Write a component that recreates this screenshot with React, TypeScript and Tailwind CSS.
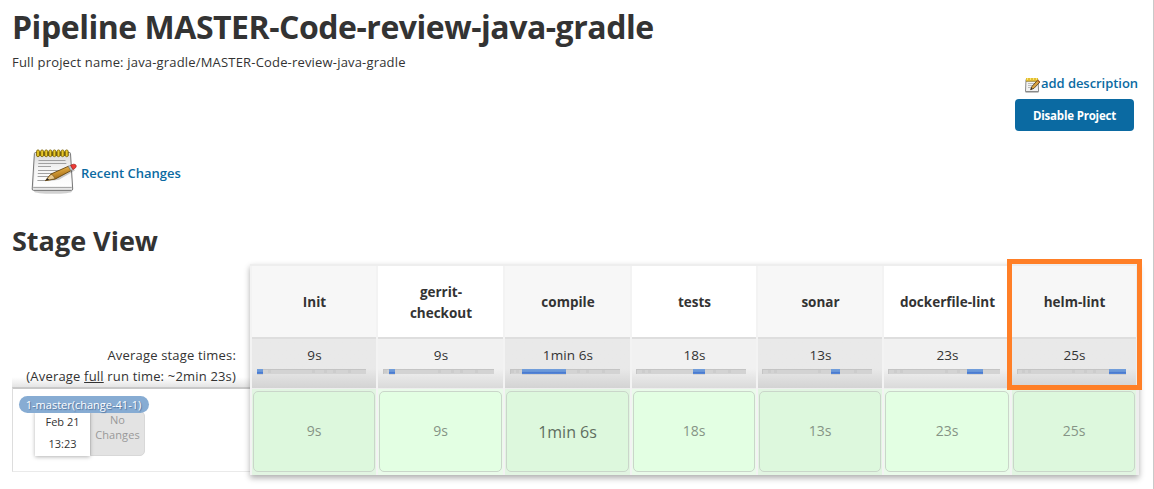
type Stage = {
  name: string;
  time: string;
  head: string;
  bar: number;
  from: number;
  to: number;
  ticks: number[];
  big?: boolean;
  tight?: boolean;
};

const STAGES: Stage[] = [
  { name: "Init", time: "9s", head: "Init", bar: 109, from: 0, to: 6, ticks: [11, 55, 67, 76, 91] },
  { name: "gerrit-checkout", time: "9s", head: "gerrit-\ncheckout", bar: 111, from: 6, to: 12, ticks: [1, 55, 68, 77, 92] },
  { name: "compile", time: "1min 6s", head: "compile", bar: 110, from: 12, to: 56, ticks: [1, 6, 67, 76, 92], big: true },
  { name: "tests", time: "18s", head: "tests", bar: 110, from: 57, to: 69, ticks: [6, 12, 77, 92], tight: true },
  { name: "sonar", time: "13s", head: "sonar", bar: 110, from: 69, to: 78, ticks: [6, 12, 56, 92], tight: true },
  { name: "dockerfile-lint", time: "23s", head: "dockerfile-lint", bar: 112, from: 79, to: 95, ticks: [6, 12, 57, 69], tight: true },
  { name: "helm-lint", time: "25s", head: "helm-lint", bar: 109, from: 92, to: 109, ticks: [5, 11, 55, 67, 76] },
];

function Notepad({ className }: { className: string }) {
  return (
    <svg className={className} viewBox="0 0 48 48" fill="none">
      <defs>
        <linearGradient id="paper" x1="0" y1="0" x2="0" y2="1">
          <stop offset="0" stopColor="#d9d9d9" />
          <stop offset="0.45" stopColor="#f4f4f4" />
          <stop offset="1" stopColor="#ffffff" />
        </linearGradient>
        <linearGradient id="wood" x1="0" y1="0" x2="0.4" y2="1">
          <stop offset="0" stopColor="#f3d27a" />
          <stop offset="0.5" stopColor="#d29a35" />
          <stop offset="1" stopColor="#9a6412" />
        </linearGradient>
      </defs>
      <ellipse cx="23" cy="43.5" rx="19" ry="2.3" fill="#000" opacity="0.18" />
      <path d="M5.6 4.5h33.8q1 0 1.1 1L42.7 41q0 1.4-1.2 1.4H3.6Q2.2 42.400 2.2 41L4.400 5.5q.1-1 1.200-1z" fill="#e6e6e6" stroke="#777" />
      <path d="M5.500 5.200h34L41.600 38.500H3.700z" fill="url(#paper)" />
      <path d="M3.200 39.500h38.500" stroke="#a8a8a8" />
      <path d="M8.500 12.500h27M8.300 15.500h28M8 18.500h13M8 22.500h27M7.800 25.500h22M7.600 28.500h17M7.400 32.500h9" stroke="#a0a0a0" />
      <rect x="6.500" y="3.500" width="32" height="4.500" fill="#6c6330" />
      {[8, 12.1, 16.2, 20.3, 24.4, 28.5, 32.6, 36.7].map((x) => (
        <rect key={x} x={x - 1.4} y="1.900" width="2.800" height="6.800" rx="1.400" fill="#e8c829" stroke="#765d00" strokeWidth="0.8" />
      ))}
      <path d="M18 33.300 29 31.700 45 22.500 44 21z" fill="#000" opacity="0.2" />
      <path d="M15.500 32.600 21 26 38.500 18.200 41 22.600 25.500 30.900z" fill="url(#wood)" stroke="#68460f" strokeWidth="0.9" strokeLinejoin="round" />
      <path d="M15.500 32.600 21 26.200q2.600.6 4 4.600z" fill="#e8c98f" stroke="#68460f" strokeWidth="0.6" />
      <path d="M15.500 32.600 17.400 30.200l1.800 1.500z" fill="#222" />
      <path d="M38.200 18.300 40.600 17.200 43 21.600 40.900 22.700z" fill="#bcc6cc" stroke="#777" strokeWidth="0.5" />
      <path d="M40.600 17.200 43.500 16.200q2.500-.2 2.800 1.800.2 1.800-3.300 3.600z" fill="#ee3b36" stroke="#a4211c" strokeWidth="0.7" />
    </svg>
  );
}

function SmallNotepad() {
  return (
    <svg className="h-4 w-4 shrink-0" viewBox="0 0 16 16" fill="none">
      <path d="M1 2.5h12l.6 12H.5z" fill="#f2f2f2" stroke="#8a8a8a" />
      <path d="M.5 15h13" stroke="#888" />
      <path d="M3 6.5h7M3 8.5h5M3 10.5h4" stroke="#bcbcbc" />
      <rect x="1" y="1" width="12" height="3.2" fill="#e2bd35" />
      <path d="M2.5 1v2M5.5 1v2M8.5 1v2M11.5 1v2" stroke="#fae66b" />
      <path d="M1 4.4h12" stroke="#8d7622" strokeWidth="0.7" />
      <path d="M5.6 12.6 7 9.400 12.500 3.200 14.900 5.100 9 11.300z" fill="#d9a343" stroke="#5c431a" strokeWidth="0.9" />
      <path d="M5.500 12.800 6.400 10.800 7.600 12z" fill="#222" />
      <path d="M12 3.800 13 2.800 15.100 4.700 14.200 5.800z" fill="#a8632f" />
    </svg>
  );
}

function TimeBar({ stage }: { stage: Stage }) {
  const id = "fill-" + stage.name;
  return (
    <svg className={stage.tight ? "ml-1 block" : "ml-[5px] block"} width={stage.bar} height="8" viewBox={`0 0 ${stage.bar} 8`}>
      <defs>
        <linearGradient id={id} x1="0" y1="0" x2="0" y2="1">
          <stop offset="0" stopColor="#729fdb" />
          <stop offset="0.5" stopColor="#6795d8" />
          <stop offset="0.6" stopColor="#4576ce" />
          <stop offset="1" stopColor="#5a8ad7" />
        </linearGradient>
      </defs>
      <rect width={stage.bar} height="5" fill="#d3d3d3" />
      <rect width={stage.bar} height="1" fill="#c4c4c4" />
      <rect width="1" height="5" fill="#c4c4c4" />
      {stage.ticks.map((x) => (
        <rect key={x} x={x} y="1" width="3" height="3" fill="#cccccc" />
      ))}
      <rect x={stage.from} y="5" width={stage.to - stage.from} height="1" fill="#000" opacity="0.08" />
      <rect x={stage.from} width={stage.to - stage.from} height="5" fill={`url(#${id})`} />
    </svg>
  );
}

function StageColumn({ stage, odd }: { stage: Stage; odd: boolean }) {
  return (
    <div className="flex flex-col border-l-2 border-[#f3f3f3]">
      <div
        className={
          "flex h-[71px] items-center justify-center whitespace-pre text-center text-[13.5px] font-bold leading-[21px] " +
          (odd ? "bg-[#f7f7f7]" : "bg-white")
        }
      >
        <span className="pt-[2px] pl-px">{stage.head}</span>
      </div>
      <div
        className={
          "h-[51px] border-t-2 border-[#dedede] bg-linear-to-b from-60% " +
          (odd ? "from-[#e9e9e9] to-[#d3d3d3]" : "from-[#f1f1f1] to-[#dadada]")
        }
      >
        <div className="h-[30px] pt-[6px] pl-px text-center text-[13.5px] leading-[21px] tracking-[0.1px]">{stage.time}</div>
        <TimeBar stage={stage} />
      </div>
      <div className={"flex h-[87px] border-t border-[#eeeeee] px-px pt-[2px] pb-[3px] " + (odd ? "bg-[#e2f5e2]" : "bg-[#eafbea]")}>
        <div
          className={
            "flex flex-1 items-center justify-center rounded-[5px] border border-[#cad6ca] " +
            (odd ? "bg-[#ddf8dd]" : "bg-[#e3ffe3]")
          }
        >
          {stage.big ? (
            <span className="pt-px text-[16px] leading-6 text-[#5f6e5f]">{stage.time}</span>
          ) : (
            <span className="-mt-[2px] text-[14px] leading-5 text-[#869486]">{stage.time}</span>
          )}
        </div>
      </div>
    </div>
  );
}

export default function App() {
  return (
    <div className="relative h-[489px] w-[1154px] overflow-hidden border-r border-[#c9c9c9] bg-white font-['Open_Sans',sans-serif] text-[#333333]">
      <h1 className="pt-[5px] pl-[12px] text-[32px] font-bold leading-[44px] tracking-[-0.47px]">
        Pipeline MASTER-Code-review-java-gradle
      </h1>
      <p className="pt-[3px] pl-[12px] text-[13px] leading-[20px] tracking-[0.18px]">
        Full project name: java-gradle/MASTER-Code-review-java-gradle
      </p>
      <div className="flex flex-col items-end pr-[15px]">
        <a className="flex h-[27px] items-start pt-[2px] text-[13px] font-semibold leading-[18px] tracking-[-0.05px] text-[#0b6aa2]">
          <span className="pt-[3px]"><SmallNotepad /></span>
          <span>add description</span>
        </a>
        <button className="mr-1 h-8 w-[119px] rounded-[4px] bg-[#0b6aa2] pt-px text-[11.5px] font-bold leading-4 tracking-[-0.2px] text-white">
          Disable Project
        </button>
      </div>
      <div className="mt-[17px] flex h-12 items-center pl-[30px]">
        <Notepad className="h-12 w-12" />
        <a className="pt-[3px] pl-[3px] text-[13px] font-semibold text-[#0b6aa2]">Recent Changes</a>
      </div>
      <h2 className="mt-[26px] pl-[12px] text-[27px] font-bold leading-[38px]">Stage View</h2>

      <div className="mt-[4px] flex pl-[12px]">
        <div className="flex w-[238px] flex-col">
          <div className="h-[123px] bg-linear-to-b from-transparent from-92% to-[#e4e4e4] pt-[81px] pr-[14px] text-right text-[13px] leading-[21px] tracking-[0.18px]">
            <div>Average stage times:</div>
            <div>
              (Average <span className="underline">full</span> run time: ~2min 23s)
            </div>
          </div>
          <div className="h-[85px] border-t-2 border-b border-l border-t-[#c8c8c8] border-b-[#eaeaea] border-l-[#dddddd] pt-[7px] pl-[6px]">
            <div className="relative z-10 flex h-[17px] w-[130px] items-center justify-center rounded-full bg-[#87acd3] pr-px text-[11px] leading-[17px] text-white [text-shadow:1px_1px_1px_#4d709a]">
              1-master(change-41-1)
            </div>
            <div className="-mt-[2px] ml-[16px] flex h-[45px] w-[110px]">
              <div className="z-[1] w-[55px] bg-white text-center text-[11px] leading-[22px] shadow-[0_1px_4px_rgba(0,0,0,0.3)]">
                <div>Feb 21</div>
                <div>13:23</div>
              </div>
              <div className="w-[55px] rounded-r-[5px] border border-[#d8d8d8] bg-[#e3e3e3] text-center text-[11px] leading-[15px] tracking-[0.1px] text-[#999999]">
                <div>No</div>
                <div>Changes</div>
              </div>
            </div>
          </div>
        </div>

        <div className="relative grid h-[211px] w-[889px] grid-cols-[126px_127px_127px_126px_126px_128px_126px] border-t-2 border-r-[3px] border-[#eeeeee] shadow-[0_3px_6px_rgba(0,0,0,0.32)]">
          {STAGES.map((stage, i) => (
            <StageColumn key={stage.name} stage={stage} odd={i % 2 === 0} />
          ))}
          <div className="absolute top-[-7px] left-[757px] h-[131px] w-[135px] border-5 border-[#ff7f27]" />
        </div>
      </div>
    </div>
  );
}
